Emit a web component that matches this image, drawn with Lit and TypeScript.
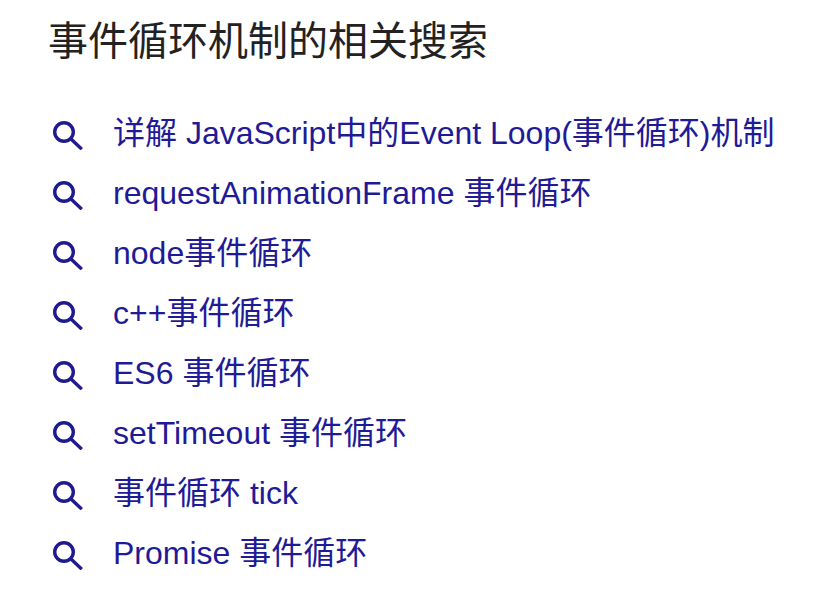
import { css, html, LitElement } from 'lit';
import { customElement } from 'lit/decorators.js';

const searches = [
  '详解 JavaScript中的Event Loop(事件循环)机制',
  'requestAnimationFrame 事件循环',
  'node事件循环',
  'c++事件循环',
  'ES6 事件循环',
  'setTimeout 事件循环',
  '事件循环 tick',
  'Promise 事件循环',
];

@customElement('app-root')
export class AppRoot extends LitElement {
  static styles = css`
    :host {
      display: block;
      height: 590px;
      overflow: hidden;
      background: #fff;
      font-family: 'Liberation Sans', 'Noto Sans CJK SC', sans-serif;
    }

    .title {
      margin: 0;
      padding: 17px 0 0 48px;
      font-size: 40px;
      line-height: 48px;
      font-weight: 400;
      color: #222;
    }

    .list {
      list-style: none;
      margin: 0;
      padding: 38px 0 0 50px;
    }

    .list li {
      display: flex;
      align-items: center;
      gap: 28px;
      height: 60px;
    }

    .list a {
      color: #1f1a96;
      font-size: 32px;
      line-height: 60px;
      text-decoration: none;
      white-space: nowrap;
    }

    .list svg {
      flex: none;
      width: 35px;
      height: 34px;
      fill: none;
      stroke: #1f1a8f;
      stroke-width: 3.4;
    }
  `;

  render() {
    return html`
      <h2 class="title">事件循环机制的相关搜索</h2>
      <ul class="list">
        ${searches.map(
          (label) => html`<li>
            <svg viewBox="0 0 35 34">
              <circle cx="14" cy="16" r="9.3"></circle>
              <path d="M21 23 L31.8 33.2"></path>
            </svg>
            <a href="#">${label}</a>
          </li>`
        )}
      </ul>
    `;
  }
}
